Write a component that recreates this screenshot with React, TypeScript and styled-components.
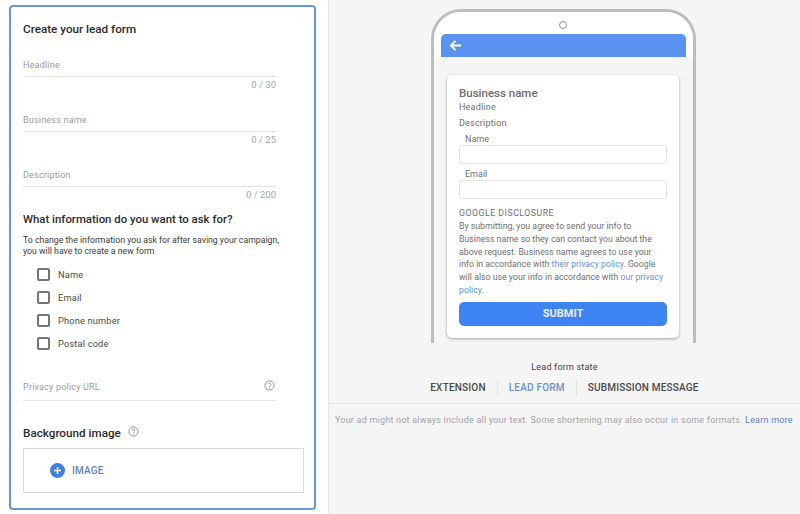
import styled, { createGlobalStyle } from "styled-components";

const GlobalStyle = createGlobalStyle`
    html, body { margin: 0; padding: 0; background: #fff; }
    * { box-sizing: border-box; }
    body { font-family: Roboto, "Liberation Sans", sans-serif; }
`;

const Page = styled.div`
    display: flex;
    width: 800px;
    height: 514px;
    overflow: hidden;
`;

const LeftColumn = styled.div`
    width: 329px;
    flex-shrink: 0;
    padding: 5px 12px 4px 9px;
    border-right: 1px solid #e6e6e6;
`;

const FormCard = styled.form`
    height: 505px;
    padding: 14px 12px 0 12px;
    border: 2px solid #6a96d6;
    border-radius: 4px;
    background: #fff;
    display: flex;
    flex-direction: column;
`;

const Title = styled.h2`
    margin: 0 0 20px;
    font-size: 11.7px;
    line-height: 16px;
    font-weight: 500;
    color: #2b2b2b;
`;

const Field = styled.div`
    width: 253px;
    height: 55px;
`;

const FieldLine = styled.div`
    height: 20px;
    padding-top: 1px;
    border-bottom: 1px solid #e0e0e0;
    font-size: 9px;
    line-height: 14px;
    letter-spacing: 0.2px;
    color: #9a9a9a;
`;

const Counter = styled.div`
    margin-top: 2px;
    text-align: right;
    font-size: 9.5px;
    line-height: 12px;
    color: #a5a5a5;
`;

const SectionHeading = styled.h3`
    margin: -11px 0 8px;
    font-size: 11.4px;
    line-height: 16px;
    font-weight: 500;
    color: #2b2b2b;
`;

const Hint = styled.p`
    margin: 0 0 11px;
    font-size: 8.73px;
    line-height: 11px;
    color: #3c3c3c;
    white-space: nowrap;
`;

const CheckList = styled.div`
    display: flex;
    flex-direction: column;
    gap: 10px;
    padding-left: 14px;
`;

const CheckRow = styled.label`
    display: flex;
    align-items: center;
    gap: 8px;
    height: 13px;
    font-size: 9.2px;
    letter-spacing: 0.2px;
    color: #4a4a4a;
`;

const CheckBox = styled.span`
    width: 13px;
    height: 13px;
    border: 2px solid #757575;
    border-radius: 2px;
`;

const PrivacyField = styled.div`
    width: 253px;
    height: 24px;
    margin-top: 27px;
    padding-bottom: 4px;
    display: flex;
    align-items: center;
    justify-content: space-between;
    border-bottom: 1px solid #e6e6e6;
    font-size: 9px;
    letter-spacing: 0.2px;
    color: #9a9a9a;
`;

const HelpIcon = styled.svg`
    width: 11px;
    height: 11px;
    margin-right: 1px;
    margin-bottom: 3px;
    fill: none;
    stroke: #8a8a8a;
`;

const ImageHeading = styled.div`
    margin-top: 24px;
    display: flex;
    align-items: center;
    gap: 7px;
    height: 16px;
    font-size: 11.7px;
    font-weight: 500;
    color: #2b2b2b;
`;

const ImageBox = styled.div`
    width: 281px;
    height: 45px;
    margin-top: 7px;
    padding-left: 26px;
    display: flex;
    align-items: center;
    gap: 7px;
    border: 1px solid #dcdcdc;
    font-size: 10px;
    font-weight: 500;
    letter-spacing: 0.2px;
    color: #5f86c9;
`;

const PlusIcon = styled.svg`
    width: 15px;
    height: 15px;
`;

const RightColumn = styled.div`
    flex: 1;
    background: #f5f5f5;
    display: flex;
    flex-direction: column;
    align-items: center;
    padding-top: 9px;
`;

const Phone = styled.div`
    width: 265px;
    height: 334px;
    margin-left: -2px;
    padding-top: 22px;
    border: 3px solid #bdbdbd;
    border-bottom: none;
    border-radius: 30px 30px 0 0;
    background: #f5f5f5;
    display: flex;
    flex-direction: column;
    align-items: center;
    position: relative;
    overflow: hidden;
`;

const PhoneTop = styled.div`
    position: absolute;
    top: 0;
    left: 0;
    right: 0;
    height: 45px;
    background: #fff;
`;

const Camera = styled.span`
    position: absolute;
    top: 9px;
    left: 125px;
    width: 8px;
    height: 8px;
    border: 1px solid #8f8f8f;
    border-radius: 50%;
    background: #fff;
`;

const AppBar = styled.div`
    width: 245px;
    height: 23px;
    flex-shrink: 0;
    padding-left: 8px;
    display: flex;
    align-items: center;
    background: #5b93f0;
    border-radius: 5px 5px 0 0;
    position: relative;
`;

const BackArrow = styled.svg`
    width: 13px;
    height: 13px;
    fill: none;
    stroke: #fff;
    stroke-width: 2;
`;

const LeadCard = styled.div`
    width: 232px;
    height: 263px;
    margin: 18px 1px 0 0;
    flex-shrink: 0;
    padding: 11px 12px 0;
    background: #fff;
    border-radius: 5px;
    box-shadow: 0 1px 3px rgba(0,0,0,0.35);
    color: #6f6f6f;
`;

const BusinessName = styled.div`
    font-size: 11.5px;
    line-height: 14px;
    font-weight: 500;
    color: #6b6b6b;
`;

const CardLine = styled.div<{ $gap: number }>`
    margin-top: ${(p) => p.$gap}px;
    font-size: 9px;
    line-height: 12px;
    letter-spacing: 0.2px;
`;

const InputLabel = styled.div`
    margin: 5px 0 0 6px;
    font-size: 9px;
    line-height: 11px;
    color: #6f6f6f;
`;

const FakeInput = styled.div`
    width: 208px;
    height: 19px;
    border: 1px solid #e4e4e4;
    border-radius: 3px;
    background: #fff;
`;

const Disclosure = styled.div`
    margin-top: 8px;
    font-size: 8.75px;
    line-height: 12.8px;
    white-space: nowrap;
    color: #6f6f6f;
`;

const DisclosureTitle = styled.div`
    letter-spacing: 0.5px;
    line-height: 13px;
`;

const Link = styled.a`
    color: #6c93cf;
`;

const SubmitButton = styled.div`
    width: 208px;
    height: 24px;
    margin-top: 5px;
    display: flex;
    align-items: center;
    justify-content: center;
    background: #3f84f3;
    border-radius: 5px;
    font-size: 11px;
    font-weight: 700;
    color: #e8eefb;
`;

const StateLabel = styled.div`
    margin-top: 18px;
    font-size: 9px;
    line-height: 12px;
    letter-spacing: 0.2px;
    color: #444;
`;

const Tabs = styled.div`
    margin-top: 5px;
    height: 20px;
    display: flex;
    align-items: center;
    font-size: 10px;
    font-weight: 500;
    letter-spacing: 0.2px;
`;

const Tab = styled.div<{ $active?: boolean; $last?: boolean }>`
    padding: 0 11px;
    line-height: 16px;
    border-right: ${(p) => (p.$last ? "none" : "1px solid #e4e4e4")};
    color: ${(p) => (p.$active ? "#6c93cf" : "#4a4a4a")};
`;

const Note = styled.div`
    align-self: stretch;
    margin-top: 5px;
    padding: 10px 0 0 6px;
    border-top: 1px solid #e6e6e6;
    font-size: 9px;
    line-height: 12px;
    letter-spacing: 0.22px;
    white-space: nowrap;
    color: #a3a3a3;
`;

const LearnMore = styled.a`
    color: #5a80bd;
`;

function Help() {
    return (
        <HelpIcon viewBox="0 0 12 12">
            <circle cx="6" cy="6" r="5" />
            <path d="M4.5 4.8a1.5 1.5 0 1 1 2.3 1.3c-.5.3-.8.6-.8 1.1M6 8.2v1" />
        </HelpIcon>
    );
}

export default function App() {
    return (
        <Page>
            <GlobalStyle />
            <LeftColumn>
                <FormCard>
                    <Title>Create your lead form</Title>
                    <Field>
                        <FieldLine>Headline</FieldLine>
                        <Counter>0 / 30</Counter>
                    </Field>
                    <Field>
                        <FieldLine>Business name</FieldLine>
                        <Counter>0 / 25</Counter>
                    </Field>
                    <Field>
                        <FieldLine>Description</FieldLine>
                        <Counter>0 / 200</Counter>
                    </Field>
                    <SectionHeading>What information do you want to ask for?</SectionHeading>
                    <Hint>
                        To change the information you ask for after saving your campaign,
                        <br />
                        you will have to create a new form
                    </Hint>
                    <CheckList>
                        <CheckRow><CheckBox />Name</CheckRow>
                        <CheckRow><CheckBox />Email</CheckRow>
                        <CheckRow><CheckBox />Phone number</CheckRow>
                        <CheckRow><CheckBox />Postal code</CheckRow>
                    </CheckList>
                    <PrivacyField>
                        Privacy policy URL
                        <Help />
                    </PrivacyField>
                    <ImageHeading>
                        Background image
                        <Help />
                    </ImageHeading>
                    <ImageBox>
                        <PlusIcon viewBox="0 0 15 15">
                            <circle cx="7.5" cy="7.5" r="7.5" fill="#3f7fe6" />
                            <path d="M7.5 4v7M4 7.5h7" stroke="#fff" strokeWidth="1.6" />
                        </PlusIcon>
                        IMAGE
                    </ImageBox>
                </FormCard>
            </LeftColumn>
            <RightColumn>
                <Phone>
                    <PhoneTop />
                    <Camera />
                    <AppBar>
                        <BackArrow viewBox="0 0 14 14">
                            <path d="M13 7H2M7 2L2 7l5 5" />
                        </BackArrow>
                    </AppBar>
                    <LeadCard>
                        <BusinessName>Business name</BusinessName>
                        <CardLine $gap={1}>Headline</CardLine>
                        <CardLine $gap={4}>Description</CardLine>
                        <InputLabel>Name</InputLabel>
                        <FakeInput />
                        <InputLabel>Email</InputLabel>
                        <FakeInput />
                        <Disclosure>
                            <DisclosureTitle>GOOGLE DISCLOSURE</DisclosureTitle>
                            By submitting, you agree to send your info to
                            <br />
                            Business name so they can contact you about the
                            <br />
                            above request. Business name agrees to use your
                            <br />
                            info in accordance with <Link>their privacy policy</Link>. Google
                            <br />
                            will also use your info in accordance with <Link>our privacy</Link>
                            <br />
                            <Link>policy</Link>.
                        </Disclosure>
                        <SubmitButton>SUBMIT</SubmitButton>
                    </LeadCard>
                </Phone>
                <StateLabel>Lead form state</StateLabel>
                <Tabs>
                    <Tab>EXTENSION</Tab>
                    <Tab $active>LEAD FORM</Tab>
                    <Tab $last>SUBMISSION MESSAGE</Tab>
                </Tabs>
                <Note>
                    Your ad might not always include all your text. Some shortening may also occur in some formats.{" "}
                    <LearnMore>Learn more</LearnMore>
                </Note>
            </RightColumn>
        </Page>
    );
}
